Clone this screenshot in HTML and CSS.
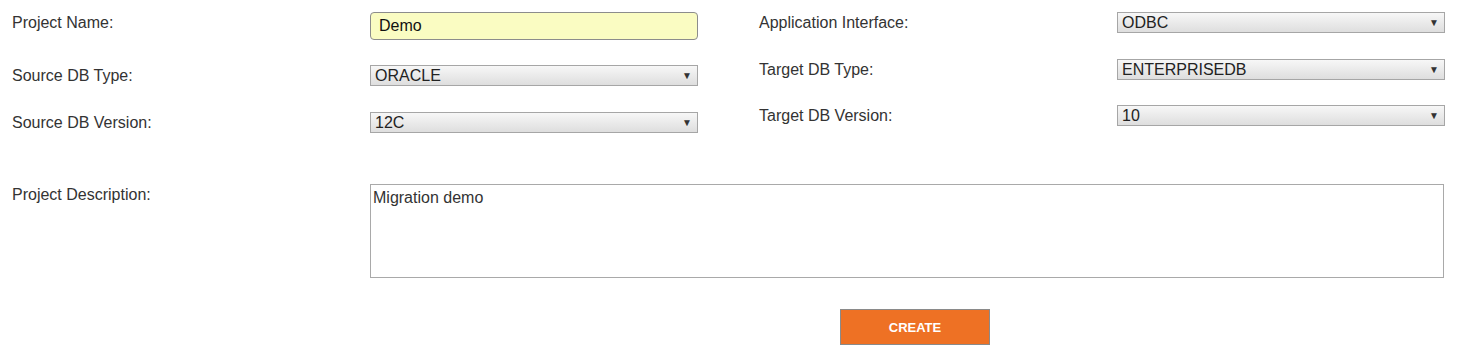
FILE: index.html
```html
<!DOCTYPE html>
<html>
<head>
<meta charset="utf-8">
<link rel="stylesheet" href="styles.css">
</head>
<body>
<form class="form">
  <div class="top">
    <div class="stack">
      <div class="row row-input">
        <label class="label">Project Name:</label>
        <input class="text-input" type="text" value="Demo">
      </div>
      <div class="row">
        <label class="label">Source DB Type:</label>
        <div class="select"><span class="select-value">ORACLE</span><span class="arrow">▼</span></div>
      </div>
      <div class="row">
        <label class="label">Source DB Version:</label>
        <div class="select"><span class="select-value">12C</span><span class="arrow">▼</span></div>
      </div>
    </div>
    <div class="stack stack-right">
      <div class="row">
        <label class="label">Application Interface:</label>
        <div class="select"><span class="select-value">ODBC</span><span class="arrow">▼</span></div>
      </div>
      <div class="row row-tight">
        <label class="label">Target DB Type:</label>
        <div class="select"><span class="select-value">ENTERPRISEDB</span><span class="arrow">▼</span></div>
      </div>
      <div class="row">
        <label class="label">Target DB Version:</label>
        <div class="select"><span class="select-value">10</span><span class="arrow">▼</span></div>
      </div>
    </div>
  </div>
  <div class="row row-desc">
    <label class="label">Project Description:</label>
    <textarea class="textarea">Migration demo</textarea>
  </div>
  <div class="actions">
    <button type="button" class="btn-create">CREATE</button>
  </div>
</form>
</body>
</html>
```

FILE: styles.css
```css
* { box-sizing: border-box; }
html, body {
  margin: 0;
  padding: 0;
  background: #ffffff;
}
body {
  font-family: "Liberation Sans", Arial, sans-serif;
  font-size: 16px;
  color: #333333;
}
.form {
  padding: 12px 0 0 12px;
  width: 1445px;
}
.top {
  display: flex;
  gap: 61px;
}
.stack {
  display: flex;
  flex-direction: column;
  width: 686px;
}
.row {
  display: flex;
  align-items: flex-start;
  margin-bottom: 26px;
}
.row-input {
  margin-bottom: 25px;
}
.row-tight {
  margin-bottom: 25px;
}
.stack .row:last-child {
  margin-bottom: 0;
}
.label {
  width: 358px;
  flex: none;
  padding-top: 2px;
  line-height: 18px;
  font-size: 16px;
  color: #333333;
}
.text-input {
  width: 328px;
  height: 28px;
  border: 1px solid #8c8c8c;
  border-radius: 4px;
  background: #fafcc2;
  font-family: "Liberation Sans", Arial, sans-serif;
  font-size: 16px;
  color: #111111;
  padding: 0 8px;
  margin: 0;
  outline: none;
}
.select {
  width: 328px;
  height: 21px;
  border: 1px solid #a6a6a6;
  background: linear-gradient(#f7f7f7, #dedede);
  display: flex;
  align-items: center;
  justify-content: space-between;
  padding: 0 5px 0 4px;
  color: #222222;
  line-height: 19px;
}
.arrow {
  font-size: 10px;
  color: #333333;
  line-height: 1;
}
.row-desc {
  margin-top: 51px;
  margin-bottom: 0;
}
.textarea {
  width: 1074px;
  height: 94px;
  border: 1px solid #a9a9a9;
  border-radius: 0;
  padding: 4px 2px;
  margin: 0;
  font-family: "Liberation Sans", Arial, sans-serif;
  font-size: 16px;
  line-height: 18px;
  color: #333333;
  resize: none;
  outline: none;
}
.actions {
  padding: 31px 0 0 828px;
}
.btn-create {
  width: 150px;
  height: 36px;
  background: #ee7124;
  border: 1px solid #8a8a8a;
  border-radius: 0;
  color: #ffffff;
  font-family: "Liberation Sans", Arial, sans-serif;
  font-size: 13px;
  font-weight: bold;
  padding: 0;
  margin: 0;
}
```
